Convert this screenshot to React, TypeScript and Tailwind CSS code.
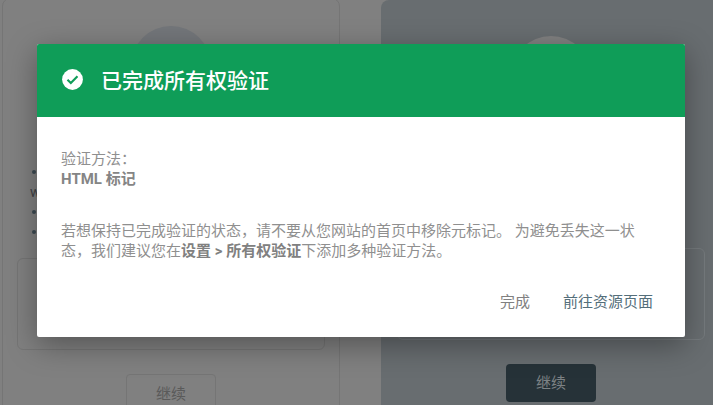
import React from "react";

function Bullet() {
  return <div className="w-[4px] h-[4px] rounded-full bg-[#3c4a52]" />;
}

export default function App() {
  return (
    <div className="relative w-[713px] h-[405px] overflow-hidden bg-[#808080] font-['Roboto','Noto_Sans_CJK_SC',sans-serif]">
      <div className="flex h-full pl-[2px] gap-[41px]">
        <section className="w-[338px] h-[420px] -mt-[2px] shrink-0 border border-[#757575] rounded-[8px] flex flex-col items-center pt-[27px]">
          <div className="w-[80px] h-[80px] rounded-full bg-[#73767a]" />
          <div className="w-full pl-[29px] mt-[56px] text-[14px] leading-[20px] text-[#3f4346]">
            <div className="h-[20px] flex items-center"><Bullet /></div>
            <div className="h-[20px] -ml-[2px] flex items-center">w</div>
            <div className="h-[20px] flex items-center"><Bullet /></div>
            <div className="h-[20px] flex items-center"><Bullet /></div>
          </div>
          <div className="w-[308px] h-[92px] mt-[16px] border border-[#757575] rounded-[6px]" />
          <div className="w-[90px] h-[40px] mt-[24px] border border-[#757575] rounded-[4px] flex items-center justify-center text-[15px] text-[#5a5a5a]">继续</div>
        </section>
        <section className="w-[340px] h-[420px] shrink-0 bg-[#686d70] rounded-[8px] flex flex-col items-center pt-[36px]">
          <div className="w-[80px] h-[80px] rounded-full bg-[#808080]" />
          <div className="w-[308px] h-[92px] mt-[132px] border border-[#757a7d] rounded-[6px]" />
          <div className="w-[90px] h-[38px] mt-[24px] bg-[#263238] rounded-[4px] flex items-center justify-center text-[15px] text-[#7d8285]">继续</div>
        </section>
      </div>

      <div className="absolute left-[37px] top-[44px] w-[648px] h-[293px] bg-white rounded-[2px] overflow-hidden shadow-[0_8px_30px_rgba(0,0,0,0.35)] flex flex-col">
        <header className="h-[73px] bg-[#0f9d58] flex items-center pl-[23px] shrink-0">
          <svg viewBox="0 0 24 24" className="w-[25px] h-[25px] -mt-[2px] shrink-0" aria-hidden="true">
            <circle cx="12" cy="12" r="10" fill="#fff" />
            <path d="M7.2 12.2l3.2 3.2 6.4-6.6" fill="none" stroke="#0f9d58" strokeWidth="2" />
          </svg>
          <h1 className="ml-[16px] text-[21px] leading-[28px] text-white font-medium">已完成所有权验证</h1>
        </header>
        <div className="flex-1 pt-[32px] px-[24px] text-[15px] leading-[20px] text-[#8f8f8f]">
          <div>验证方法：</div>
          <div className="font-bold text-[#858585]">HTML 标记</div>
          <p className="mt-[32px] w-[585px]">
            若想保持已完成验证的状态，请不要从您网站的首页中移除元标记。 为避免丢失这一状态，我们建议您在<b className="font-bold text-[#808080]">设置 &gt; 所有权验证</b>下添加多种验证方法。
          </p>
        </div>
        <footer className="h-[45px] flex justify-end items-start pr-[32px] gap-[33px] text-[15px] leading-[20px]">
          <span className="text-[#808080]">完成</span>
          <span className="text-[#546e7a]">前往资源页面</span>
        </footer>
      </div>
    </div>
  );
}
